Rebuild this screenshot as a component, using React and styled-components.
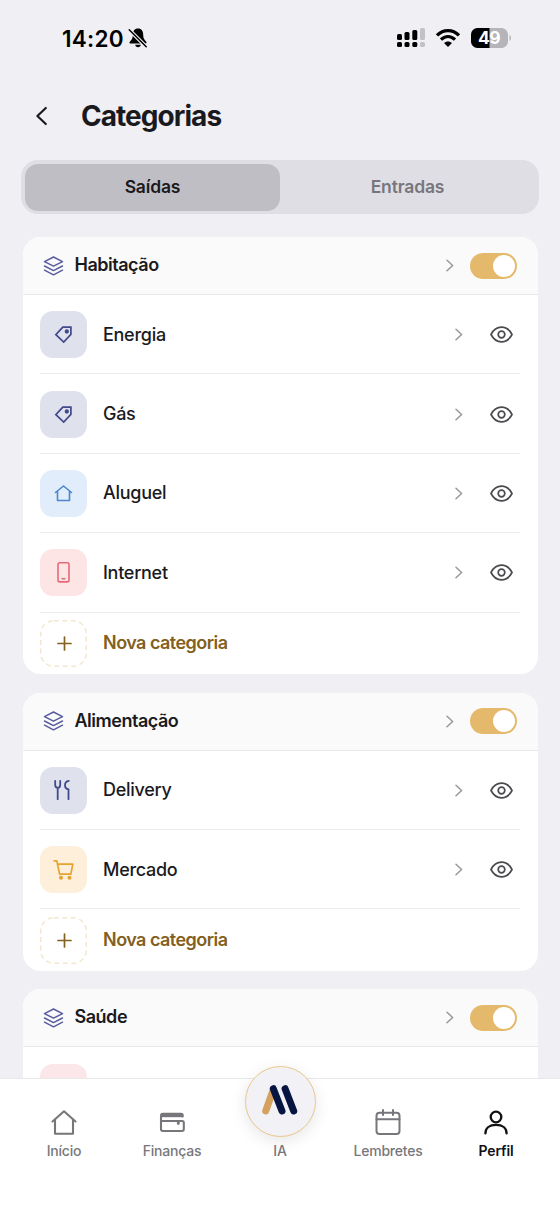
import React from "react";
import styled, { createGlobalStyle } from "styled-components";

const GlobalStyle = createGlobalStyle`
  * { box-sizing: border-box; }
  body { margin: 0; background: #f0eff4; }
`;

const Screen = styled.div`
  width: 560px;
  height: 1213px;
  display: flex;
  flex-direction: column;
  overflow: hidden;
  background: #f0eff4;
  color: #1a1a1e;
  font-family: Inter, "Liberation Sans", sans-serif;
`;

const StatusBar = styled.div`
  display: flex;
  justify-content: space-between;
  align-items: center;
  height: 76px;
  padding: 0 48px 0 62px;
  flex: none;
`;

const StatusGroup = styled.div`
  display: flex;
  align-items: center;
  gap: ${(p) => p.$gap}px;
`;

const Clock = styled.span`
  font-size: 22.5px;
  font-weight: 600;
  letter-spacing: 0.25px;
  color: #000;
`;

const Header = styled.header`
  display: flex;
  align-items: center;
  height: 80px;
  padding-left: 35px;
  gap: 33px;
  flex: none;
`;

const Title = styled.h1`
  margin: 0;
  font-size: 28px;
  font-weight: 700;
  letter-spacing: -0.95px;
  line-height: 34px;
`;

const Segmented = styled.div`
  display: flex;
  height: 54px;
  margin: 4px 21px 23px 21px;
  padding: 4px 4px 3px;
  border-radius: 17px;
  background: #dfdee4;
  flex: none;
`;

const Segment = styled.div`
  flex: 1;
  display: flex;
  align-items: center;
  justify-content: center;
  padding-bottom: 3px;
  border-radius: 13px;
  font-size: 17.5px;
  font-weight: 600;
  letter-spacing: -0.15px;
  color: ${(p) => (p.$active ? "#1a1a1e" : "#77767c")};
  background: ${(p) => (p.$active ? "#bfbec4" : "transparent")};
`;

const List = styled.main`
  flex: 1;
  min-height: 0;
  overflow: hidden;
  display: flex;
  flex-direction: column;
  gap: 18.8px;
  padding: 0 22.5px;
`;

const Card = styled.section`
  flex: none;
  border-radius: 18px;
  overflow: hidden;
  background: #fff;
`;

const CardHeader = styled.div`
  display: flex;
  align-items: center;
  height: 58px;
  padding: 0 20.5px 0 20px;
  background: #fafafa;
  border-bottom: 1px solid #e9e9ec;
`;

const CardTitle = styled.h2`
  flex: 1;
  margin: 0 0 2px 11px;
  font-size: 18px;
  font-weight: 600;
  letter-spacing: -0.48px;
`;

const Toggle = styled.div`
  display: flex;
  justify-content: flex-end;
  align-items: center;
  width: 47px;
  height: 26px;
  margin-left: 16px;
  padding: 0 2px;
  border-radius: 13px;
  background: #e5b96c;
`;

const Knob = styled.div`
  width: 22px;
  height: 22px;
  border-radius: 50%;
  background: #fff;
`;

const Row = styled.div`
  display: flex;
  align-items: center;
  height: 79.4px;
  margin: 0 18px 0 17.5px;
  padding: 1px 6.5px 0 0;
  border-bottom: 1px solid #ebebee;
`;

const Tile = styled.div`
  display: flex;
  align-items: center;
  justify-content: center;
  width: 47px;
  height: 47px;
  border-radius: 13px;
  color: ${(p) => p.$color};
  background: ${(p) => p.$bg};
`;

const RowLabel = styled.span`
  flex: 1;
  margin-left: 16px;
  padding-bottom: 1px;
  font-size: 18px;
  font-weight: 500;
  letter-spacing: -0.28px;
`;

const EyeSlot = styled.div`
  display: flex;
  margin-left: 27.5px;
`;

const NewRow = styled.div`
  display: flex;
  align-items: center;
  height: 61.2px;
  margin: 0 18px 0 17.5px;
  padding-top: 1px;
`;

const DashedTile = styled.svg`
  display: block;
  width: 47px;
  height: 47px;
`;

const NewLabel = styled.span`
  margin-left: 16px;
  padding-bottom: 2px;
  font-size: 18px;
  font-weight: 600;
  letter-spacing: -0.54px;
  color: #835f20;
`;

const TabBar = styled.nav`
  position: relative;
  display: flex;
  height: 135px;
  padding: 0 10px;
  background: #fff;
  border-top: 1px solid #e8e8ea;
  flex: none;
`;

const Tab = styled.div`
  flex: 1;
  display: flex;
  flex-direction: column;
  align-items: center;
  padding-top: 29px;
  color: ${(p) => (p.$active ? "#111114" : "#77777b")};
`;

const TabLabel = styled.span`
  margin-top: ${(p) => p.$top || 6}px;
  font-size: 14px;
  line-height: 18px;
  font-weight: ${(p) => (p.$active ? 600 : 500)};
  letter-spacing: ${(p) => (p.$active ? -0.15 : -0.22)}px;
`;

const LogoTab = styled(Tab)`
  padding-top: 0;
`;

const LogoButton = styled.div`
  display: flex;
  align-items: center;
  justify-content: center;
  width: 71px;
  height: 71px;
  margin-top: -13.5px;
  border-radius: 50%;
  border: 1.5px solid #e9c88d;
  background: #f2f1f6;
  box-shadow: 0 4px 16px rgba(0, 0, 0, 0.1);
`;

const line = { fill: "none", stroke: "currentColor", strokeLinecap: "round", strokeLinejoin: "round" };

const Muted = () => (
  <svg width="20" height="20" viewBox="0 0 20 20">
    <path d="M10 .6c-3.600 0-5.200 2.700-5.200 6.100 0 3.400-.8 4.600-2.800 6.700-.9 1-.6 2.100.7 2.100h14.600c1.300 0 1.600-1.100.7-2.100-2-2.100-2.800-3.300-2.800-6.700C15.200 3.300 13.600.6 10 .6z" fill="#000" />
    <path d="M7.200 16.800h5.600c-.2 1.600-1.300 2.500-2.800 2.500s-2.600-.9-2.800-2.500z" fill="#000" />
    <path d="M1.200 1.800l17 17" stroke="#f0eff4" strokeWidth="3.600" />
    <path d="M1.200 1.800l17 17" stroke="#000" strokeWidth="1.500" strokeLinecap="round" />
  </svg>
);

const Signal = () => (
  <svg width="29" height="20" viewBox="0 0 29 20">
    <g fill="#000">
      <rect x="1" y="6" width="5" height="6" rx="1.500" />
      <rect x="8.500" y="4" width="5" height="8" rx="1.500" />
      <rect x="16.300" y="2" width="5" height="10" rx="1.500" />
      <rect x="1" y="14" width="5" height="5" rx="1.500" />
      <rect x="8.500" y="14" width="5" height="5" rx="1.500" />
      <rect x="16.300" y="14" width="5" height="5" rx="1.500" />
    </g>
    <g fill="#c2c1c5">
      <rect x="24" y="0" width="5" height="12" rx="1.500" />
      <rect x="24" y="14" width="5" height="5" rx="1.500" />
    </g>
  </svg>
);

const Wifi = () => (
  <svg width="26" height="20" viewBox="0 0 26 20" fill="none" stroke="#000" strokeWidth="3.300">
    <path d="M2 7.400C8.300.9 17.700.9 24 7.400" />
    <path d="M6 11.600c4.200-4.100 9.800-4.100 14 0" />
    <path d="M9 15.100c2.200-2.200 5.800-2.200 8 0l-4 4z" fill="#000" stroke="none" />
  </svg>
);

const Battery = () => (
  <svg width="41" height="20" viewBox="0 0 41 20">
    <defs>
      <clipPath id="battery"><rect width="37" height="20" rx="6.500" /></clipPath>
    </defs>
    <g clipPath="url(#battery)">
      <rect width="37" height="20" fill="#b5b4b8" />
      <rect width="18.500" height="20" fill="#000" />
    </g>
    <path d="M38.500 7c2 .8 2 5.200 0 6z" fill="#b5b4b8" />
    <text x="18" y="16.200" textAnchor="middle" fontFamily="Inter, sans-serif" fontSize="17.500" fontWeight="700" letterSpacing="-0.500" fill="#fff">49</text>
  </svg>
);

const Back = () => (
  <svg width="13" height="20" viewBox="0 0 13 20" {...line} strokeWidth="2.200">
    <path d="M10.800 2L2.400 10l8.400 8" />
  </svg>
);

const Chevron = () => (
  <svg width="8" height="13" viewBox="0 0 8 13" {...line} stroke="#98979b" strokeWidth="1.500">
    <path d="M1 1.200l5.600 5.300L1 11.800" />
  </svg>
);

const Layers = () => (
  <svg width="21" height="20" viewBox="0 0 21 20" {...line} stroke="#595c9c" strokeWidth="1.500">
    <path d="M10.500 1l9 4.600-9 4.600-9-4.600z" />
    <path d="M1.500 10l9 4.600 9-4.600M1.500 14.200l9 4.600 9-4.600" />
  </svg>
);

const Eye = () => (
  <svg width="23" height="17" viewBox="0 0 23 17" {...line} stroke="#4b4b4f" strokeWidth="1.700">
    <path d="M1 8.500C3.300 4 7 1.200 11.500 1.200S19.700 4 22 8.500c-2.300 4.500-6 7.300-10.500 7.300S3.300 13 1 8.500z" />
    <circle cx="11.500" cy="8.500" r="3.300" />
  </svg>
);

const Tag = () => (
  <svg width="19" height="19" viewBox="0 0 19 19" {...line} strokeWidth="1.700" strokeLinejoin="miter">
    <path d="M1.900 9.700L8.800 2.200h8.100v7.200L9.700 17z" />
    <circle cx="12.800" cy="6.500" r="1.300" fill="currentColor" />
  </svg>
);

const House = () => (
  <svg width="19" height="19" viewBox="0 0 19 19" {...line} strokeWidth="1.600">
    <path d="M1.500 8.500l8-6.500 8 6.500M3.500 7.200v9.300h12V7.200" />
  </svg>
);

const Phone = () => (
  <svg width="15" height="23" viewBox="0 0 15 23" {...line} strokeWidth="1.600">
    <rect x="2" y="1.700" width="11" height="19.200" rx="1.800" />
    <path d="M6.200 17.800h2.600" />
  </svg>
);

const Cutlery = () => (
  <svg width="21" height="22" viewBox="0 0 21 22" {...line} strokeWidth="1.800">
    <path d="M2.200 1.800v4c0 1.800.9 3 2.500 3s2.500-1.200 2.500-3v-4M4.700 8.800v11.400M15.800 1.800c-2.600.3-3.900 2.300-3.800 4.900.1 2.200 1.400 3.200 3.500 3.600v9.900" />
  </svg>
);

const Cart = () => (
  <svg width="22" height="22" viewBox="0 0 22 22" {...line} strokeWidth="1.700">
    <path d="M1.200 1.800h2.600l2.800 13.400h11.200M4.600 5.200h15.200l-2 10" />
    <circle cx="8" cy="18.800" r="2" fill="currentColor" stroke="none" />
    <circle cx="16.500" cy="18.800" r="2" fill="currentColor" stroke="none" />
  </svg>
);

const HomeTab = () => (
  <svg width="28" height="28" viewBox="0 0 28 28" {...line} strokeWidth="2.100">
    <path d="M2.500 13.500L14 3.300l11.500 10.200M5 11.500v14.200h18V11.500" />
  </svg>
);

const WalletTab = () => (
  <svg width="28" height="28" viewBox="0 0 28 28" {...line} strokeWidth="2.100">
    <path d="M24.700 8.400v-1c0-1-.7-1.700-1.700-1.700H4.900c-1.100 0-1.900.8-1.900 1.900V21c0 1.200.8 2 2 2h19c1.100 0 1.800-.8 1.800-1.900V14.600c0-1-.8-1.600-1.800-1.600H3.200" />
    <path d="M3.200 5.500h21.500v3.700H3.200z" fill="currentColor" stroke="none" />
    <path d="M20.300 14v1.600" strokeWidth="2.800" />
  </svg>
);

const CalendarTab = () => (
  <svg width="28" height="28" viewBox="0 0 28 28" {...line} strokeWidth="2">
    <rect x="2.500" y="4.800" width="23" height="21.200" rx="3" />
    <path d="M2.500 11.200h23M9 2v5M19 2v5" />
  </svg>
);

const ProfileTab = () => (
  <svg width="28" height="28" viewBox="0 0 28 28" {...line} strokeWidth="2.300">
    <circle cx="14" cy="9" r="5.300" />
    <path d="M3.400 25.400c0-5.500 4.200-8.500 10.600-8.500s10.600 3 10.600 8.500" />
  </svg>
);

const Logo = () => (
  <svg width="38" height="32" viewBox="0 0 38 32" fill="none" strokeLinecap="round" strokeWidth="7">
    <path d="M4.700 26L12 5.500" stroke="#d4a15f" />
    <path d="M12.300 3.700L21 26M24.100 3.700L32.700 26" stroke="#071641" />
  </svg>
);

const GROUPS = [
  {
    name: "Habitação",
    items: [
      { label: "Energia", icon: Tag, color: "#414a8b", bg: "#dfe2ec" },
      { label: "Gás", icon: Tag, color: "#414a8b", bg: "#dfe2ec" },
      { label: "Aluguel", icon: House, color: "#4b86d0", bg: "#e1edfa" },
      { label: "Internet", icon: Phone, color: "#e66a76", bg: "#fde5e6" },
    ],
    canAdd: true,
  },
  {
    name: "Alimentação",
    items: [
      { label: "Delivery", icon: Cutlery, color: "#414a8b", bg: "#dfe2ec" },
      { label: "Mercado", icon: Cart, color: "#e7a32f", bg: "#fdefd9" },
    ],
    canAdd: true,
  },
  {
    name: "Saúde",
    items: [{ label: "", icon: House, color: "#e66a76", bg: "#fbe6ea" }],
    canAdd: false,
  },
];

function Category({ item }) {
  const Icon = item.icon;
  return (
    <Row>
      <Tile $color={item.color} $bg={item.bg}><Icon /></Tile>
      <RowLabel>{item.label}</RowLabel>
      <Chevron />
      <EyeSlot><Eye /></EyeSlot>
    </Row>
  );
}

function NewCategory() {
  return (
    <NewRow>
      <DashedTile viewBox="0 0 47 47" fill="none">
        <rect x=".75" y=".75" width="45.500" height="45.500" rx="13" stroke="#f2e8d0" strokeWidth="1.500" strokeDasharray="5 3.500" />
        <path d="M18 23.500h13M24.500 17v13" stroke="#835f20" strokeWidth="1.700" strokeLinecap="round" />
      </DashedTile>
      <NewLabel>Nova categoria</NewLabel>
    </NewRow>
  );
}

export default function App() {
  return (
    <>
      <GlobalStyle />
      <Screen>
        <StatusBar>
          <StatusGroup $gap={4}>
            <Clock>14:20</Clock>
            <Muted />
          </StatusGroup>
          <StatusGroup $gap={10}>
            <Signal />
            <Wifi />
            <Battery />
          </StatusGroup>
        </StatusBar>
        <Header>
          <Back />
          <Title>Categorias</Title>
        </Header>
        <Segmented>
          <Segment $active>Saídas</Segment>
          <Segment>Entradas</Segment>
        </Segmented>
        <List>
          {GROUPS.map((g) => (
            <Card key={g.name}>
              <CardHeader>
                <Layers />
                <CardTitle>{g.name}</CardTitle>
                <Chevron />
                <Toggle><Knob /></Toggle>
              </CardHeader>
              {g.items.map((item) => <Category key={item.label} item={item} />)}
              {g.canAdd && <NewCategory />}
            </Card>
          ))}
        </List>
        <TabBar>
          <Tab><HomeTab /><TabLabel>Início</TabLabel></Tab>
          <Tab><WalletTab /><TabLabel>Finanças</TabLabel></Tab>
          <LogoTab>
            <LogoButton><Logo /></LogoButton>
            <TabLabel $top={5.5}>IA</TabLabel>
          </LogoTab>
          <Tab><CalendarTab /><TabLabel>Lembretes</TabLabel></Tab>
          <Tab $active><ProfileTab /><TabLabel $active>Perfil</TabLabel></Tab>
        </TabBar>
      </Screen>
    </>
  );
}
